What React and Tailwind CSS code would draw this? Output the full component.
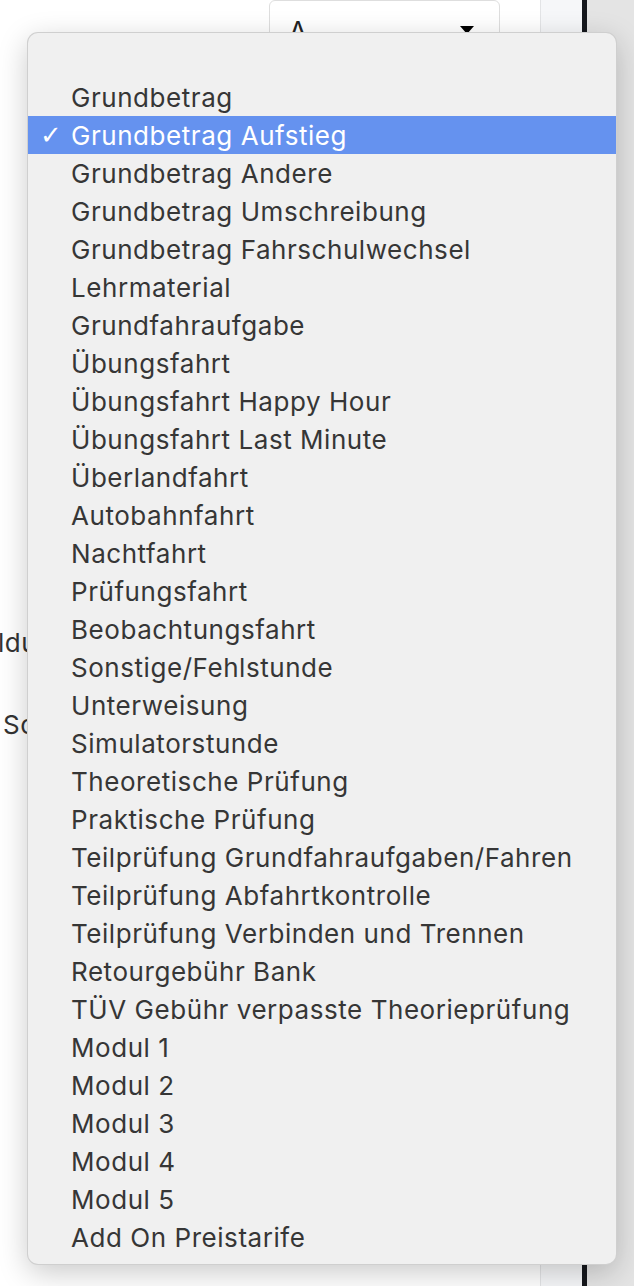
import React from "react";

const options = [
  "",
  "Grundbetrag",
  "Grundbetrag Aufstieg",
  "Grundbetrag Andere",
  "Grundbetrag Umschreibung",
  "Grundbetrag Fahrschulwechsel",
  "Lehrmaterial",
  "Grundfahraufgabe",
  "Übungsfahrt",
  "Übungsfahrt Happy Hour",
  "Übungsfahrt Last Minute",
  "Überlandfahrt",
  "Autobahnfahrt",
  "Nachtfahrt",
  "Prüfungsfahrt",
  "Beobachtungsfahrt",
  "Sonstige/Fehlstunde",
  "Unterweisung",
  "Simulatorstunde",
  "Theoretische Prüfung",
  "Praktische Prüfung",
  "Teilprüfung Grundfahraufgaben/Fahren",
  "Teilprüfung Abfahrtkontrolle",
  "Teilprüfung Verbinden und Trennen",
  "Retourgebühr Bank",
  "TÜV Gebühr verpasste Theorieprüfung",
  "Modul 1",
  "Modul 2",
  "Modul 3",
  "Modul 4",
  "Modul 5",
  "Add On Preistarife",
];

const selected = "Grundbetrag Aufstieg";

function App() {
  return (
    <div
      className="relative w-[634px] h-[1286px] overflow-hidden bg-white text-[#333]"
      style={{ fontFamily: "Inter, 'Liberation Sans', sans-serif" }}
    >
      {/* page behind the open menu */}
      <div className="flex h-full">
        <div className="w-[540px] shrink-0 bg-white">
          <div className="flex">
            <div className="w-[269px] shrink-0">
              <div className="w-[28px] overflow-hidden">
                <div className="mt-[628px] -ml-[2px] text-[26px] leading-[30px] tracking-[0.5px] whitespace-nowrap">ldu</div>
                <div className="mt-[52px] ml-[3px] text-[26px] leading-[30px] tracking-[0.5px] whitespace-nowrap">So</div>
              </div>
            </div>
            <div className="w-[231px] h-[80px] shrink-0 rounded-[6px] border border-[#dedede] bg-white flex items-start justify-between pl-[19px] pr-[25px] pt-[15px]">
              <span className="text-[26px] leading-[30px] text-[#222]">A</span>
              <span className="mt-[10px] w-0 h-0 border-l-[7px] border-r-[7px] border-t-[8px] border-l-transparent border-r-transparent border-t-black" />
            </div>
          </div>
        </div>
        <div className="w-[42px] shrink-0 border-l border-[#e3e4e6] bg-[#f6f7f9]" />
        <div className="w-[5px] shrink-0 bg-[#16181d]" />
        <div className="flex-1 bg-[#e4e4e4]" />
      </div>

      {/* native select popup */}
      <div className="absolute left-[28px] top-[33px] w-[588px] rounded-[10px] bg-[#f0f0f0] pt-[7px] pb-[8px] shadow-[0_8px_30px_rgba(0,0,0,0.22)] ring-1 ring-[#cfcfcf]">
        {options.map((opt, i) => {
          const isSel = opt === selected;
          return (
            <div
              key={i}
              className={
                "flex items-center h-[38px] pl-[12px] text-[26px] tracking-[0.55px] whitespace-nowrap " +
                (isSel ? "bg-[#6592ef] text-white" : "text-[#363636]")
              }
            >
              <span
                className="w-[31px] shrink-0 text-[26px] tracking-normal"
                style={{ fontFamily: "'DejaVu Sans', sans-serif" }}
              >
                {isSel ? "✓" : ""}
              </span>
              <span>{opt}</span>
            </div>
          );
        })}
      </div>
    </div>
  );
}

export default App;
